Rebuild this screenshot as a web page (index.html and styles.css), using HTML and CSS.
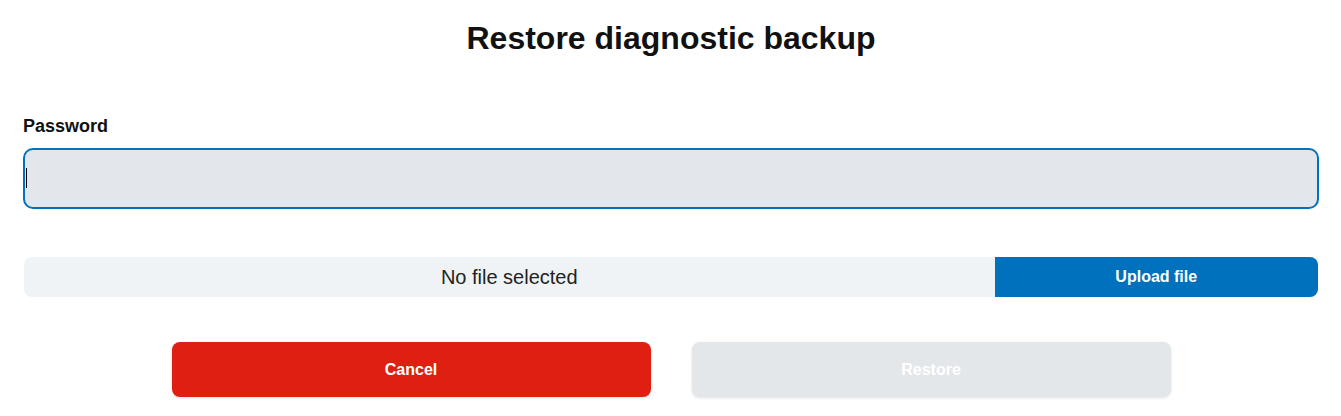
FILE: index.html
```html
<!DOCTYPE html>
<html lang="en">
  <head>
    <meta charset="UTF-8" />
    <title>Restore diagnostic backup</title>
    <link rel="stylesheet" href="styles.css">
  </head>
  <body>
    <div class="dialog">
      <h1>Restore diagnostic backup</h1>

      <div class="field">
        <label for="password">Password</label>
        <div class="input-wrap">
          <input type="password" id="password" autofocus />
          <span class="caret"></span>
        </div>
      </div>

      <div class="file-row">
        <span class="file-name">No file selected</span>
        <button class="upload-btn">Upload file</button>
      </div>

      <div class="actions">
        <button class="btn btn-cancel">Cancel</button>
        <button class="btn btn-restore" disabled>Restore</button>
      </div>
    </div>
  </body>
</html>
```

FILE: styles.css
```css
html,
body {
  margin: 0;
  padding: 0;
  background: #fff;
  font-family: "Liberation Sans", Arial, sans-serif;
  color: #111;
}
.dialog {
  padding: 20px 22px 20px 23px;
}
h1 {
  margin: 0;
  text-align: center;
  font-size: 32px;
  font-weight: bold;
}
.field {
  margin-top: 59px;
}
.field label {
  display: block;
  font-size: 18px;
  font-weight: bold;
  margin-bottom: 11px;
}
.input-wrap {
  position: relative;
}
.field input {
  display: block;
  width: 100%;
  height: 61px;
  box-sizing: border-box;
  border: 2px solid #0071bc;
  border-radius: 10px;
  background: #e3e7eb;
  padding: 0 2px;
  font-size: 18px;
  outline: none;
  caret-color: transparent;
}
.caret {
  position: absolute;
  left: 3px;
  top: 20px;
  width: 1px;
  height: 20px;
  background: #000;
}
.file-row {
  margin: 48px 1px 0;
  display: flex;
  height: 40px;
  border-radius: 8px;
  overflow: hidden;
  background: #f0f3f6;
}
.file-name {
  flex: 1;
  display: flex;
  align-items: center;
  justify-content: center;
  font-size: 20px;
  color: #222;
}
.upload-btn {
  flex: 0 0 25%;
  border: none;
  background: #0071bc;
  color: #fff;
  font-family: inherit;
  font-size: 16px;
  font-weight: bold;
}
.actions {
  margin-top: 45px;
  display: flex;
  justify-content: center;
  gap: 41px;
}
.btn {
  width: 479px;
  height: 55px;
  border: none;
  border-radius: 8px;
  color: #fff;
  font-family: inherit;
  font-size: 16px;
  font-weight: bold;
  box-shadow: 0 1px 3px rgba(0, 0, 0, 0.12);
}
.btn-cancel {
  background: #de1f12;
}
.btn-restore {
  background: #e3e7ea;
}
```
